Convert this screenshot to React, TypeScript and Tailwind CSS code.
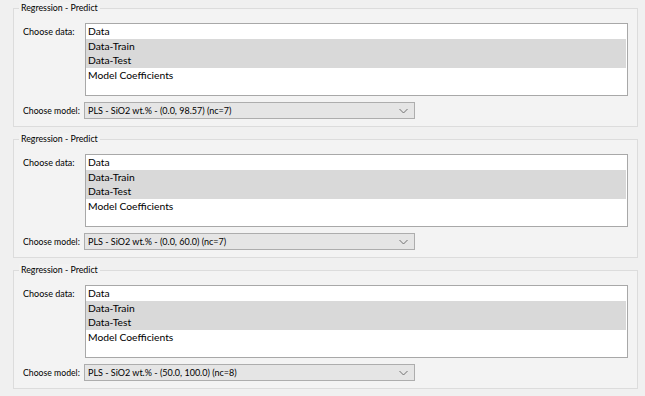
import React from "react";

const groups = [
  "PLS - SiO2 wt.% - (0.0, 98.57) (nc=7)",
  "PLS - SiO2 wt.% - (0.0, 60.0) (nc=7)",
  "PLS - SiO2 wt.% - (50.0, 100.0) (nc=8)",
];

const items = ["Data", "Data-Train", "Data-Test", "Model Coefficients"];
const selected = [false, true, true, false];

function Group({ model }: { model: string }) {
  return (
    <div className="relative h-[119px] border border-[#dcdcdc] bg-[#f3f3f3] pt-[14px] pb-[7px] pl-[9px] pr-[9px]">
      <div className="absolute left-[5px] top-[-7px] whitespace-nowrap bg-[#f2f2f2] px-[2px] text-[8.8px] leading-[12px] text-black">
        Regression - Predict
      </div>
      <div className="flex">
        <div className="w-[62px] shrink-0 whitespace-nowrap pt-[3px] text-[9px] leading-[12px] text-black">Choose data:</div>
        <div className="h-[73px] flex-1 border border-[#a8a8a8] bg-white pr-[1px]">
          {items.map((it, i) => (
            <div
              key={it}
              className={
                "h-[14.5px] whitespace-nowrap pl-[2px] text-[10.3px] leading-[14.5px] text-black " +
                (selected[i] ? "bg-[#d9d9d9]" : "")
              }
            >
              {it}
            </div>
          ))}
        </div>
      </div>
      <div className="mt-[6px] flex items-center">
        <div className="w-[61px] shrink-0 whitespace-nowrap text-[8.7px] leading-[12px] text-black">Choose model:</div>
        <div className="flex h-[17px] w-[331px] items-center justify-between border border-[#adadad] bg-[#e5e5e5] pl-[3px] pr-[6px]">
          <span className="whitespace-nowrap text-[9px] leading-[12px] text-black">{model}</span>
          <svg width="9" height="6" viewBox="0 0 9 6" fill="none">
            <path d="M0.5 1 L4.5 5 L8.5 1" stroke="#707070" strokeWidth="1" />
          </svg>
        </div>
      </div>
    </div>
  );
}

export default function App() {
  return (
    <div
      className="flex h-[396px] w-[645px] flex-col gap-[12px] bg-[#f0f0f0] pl-[13px] pr-[7px] pt-[8px]"
      style={{ fontFamily: 'Lato, "Noto Sans", sans-serif' }}
    >
      {groups.map((g) => (
        <Group key={g} model={g} />
      ))}
    </div>
  );
}
